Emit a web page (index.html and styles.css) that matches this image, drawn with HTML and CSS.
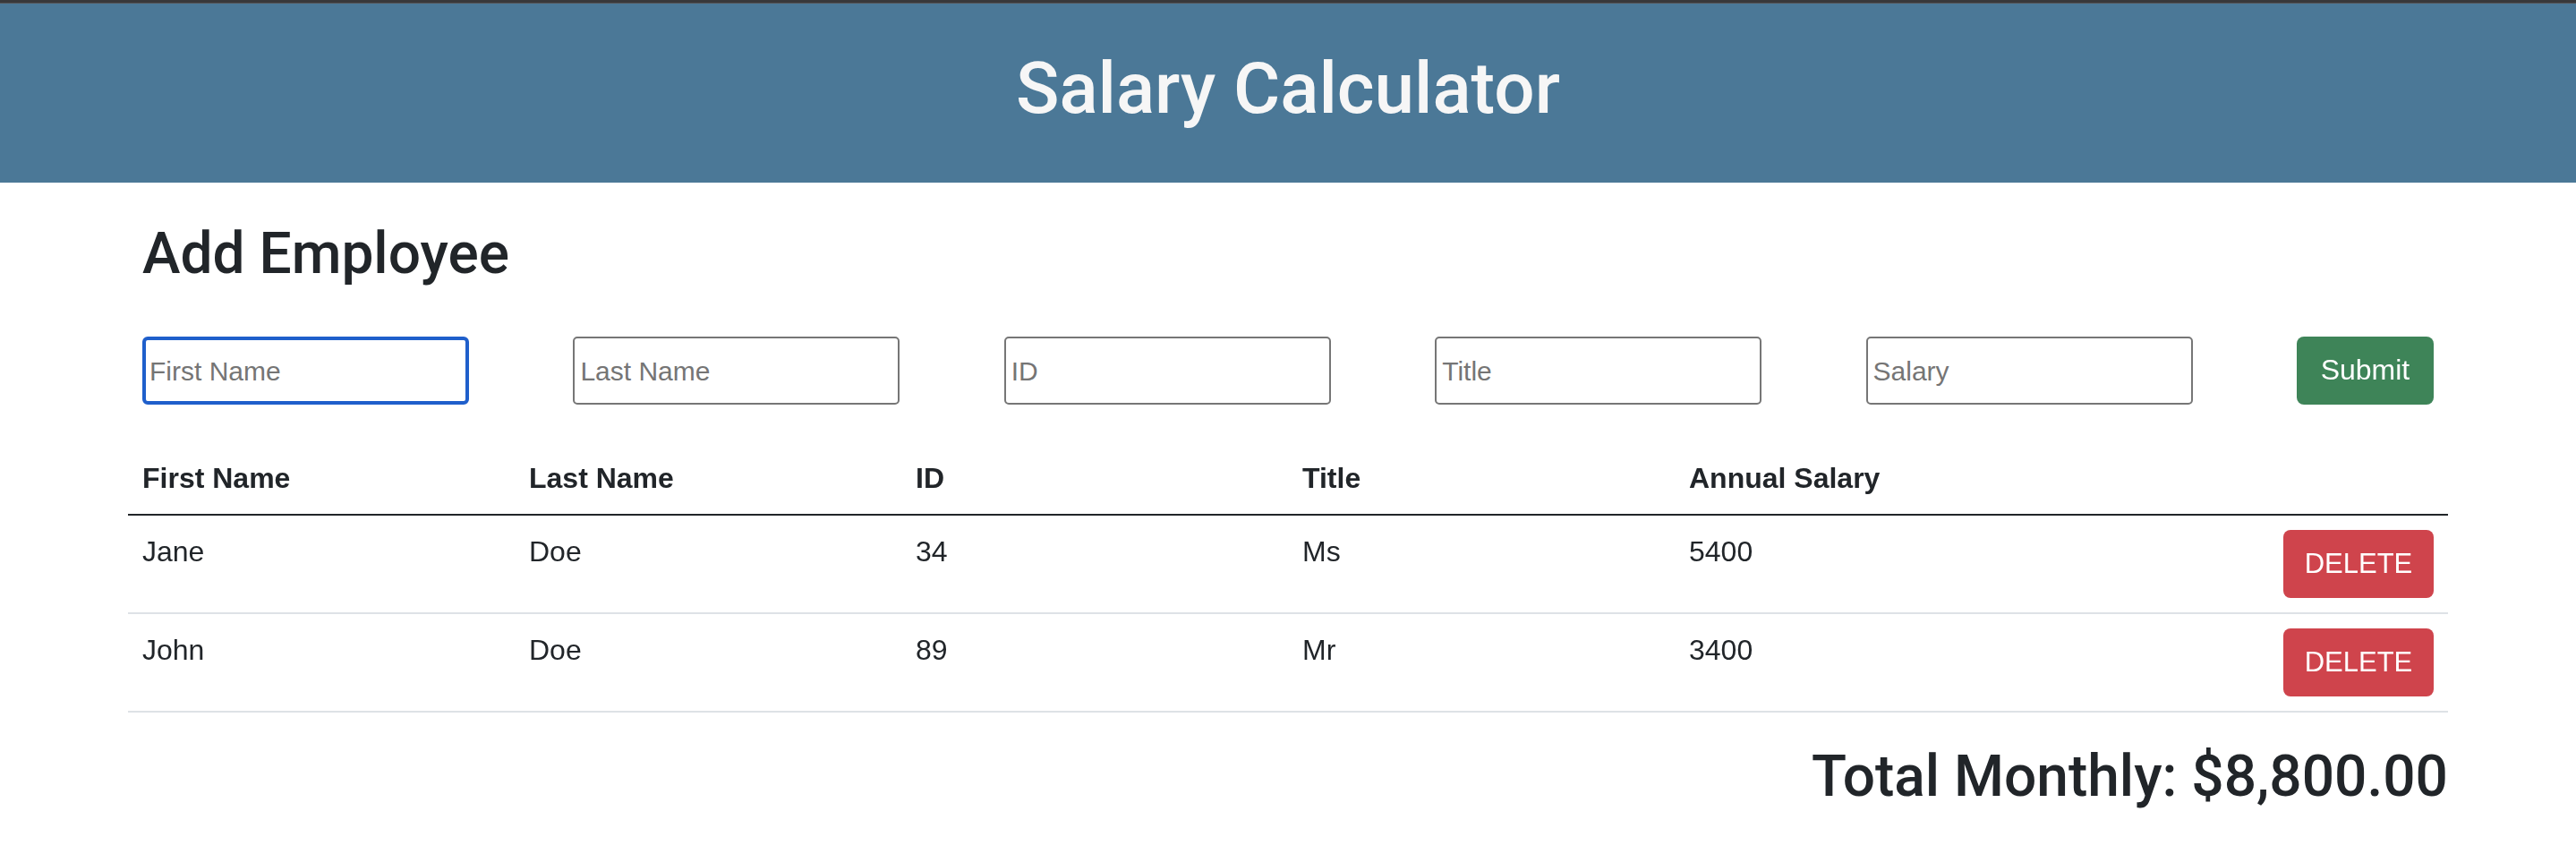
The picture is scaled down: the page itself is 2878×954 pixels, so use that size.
FILE: index.html
```html
<!DOCTYPE html>
<html lang="en">
<head>
<meta charset="utf-8">
<title>Salary Calculator</title>
<link rel="stylesheet" href="styles.css">
</head>
<body>
<div class="topbar"></div>
<header class="app-header">
  <h1 class="app-title">Salary Calculator</h1>
</header>
<main class="container">
  <section class="add-section">
    <h2 class="section-title">Add Employee</h2>
    <form class="employee-form">
      <input class="field is-focused" type="text" placeholder="First Name" autofocus>
      <input class="field" type="text" placeholder="Last Name">
      <input class="field" type="text" placeholder="ID">
      <input class="field" type="text" placeholder="Title">
      <input class="field" type="text" placeholder="Salary">
      <button class="btn btn-submit" type="button">Submit</button>
    </form>
  </section>
  <table class="emp-table">
    <thead>
      <tr>
        <th>First Name</th>
        <th>Last Name</th>
        <th>ID</th>
        <th>Title</th>
        <th>Annual Salary</th>
        <th></th>
      </tr>
    </thead>
    <tbody>
      <tr>
        <td>Jane</td>
        <td>Doe</td>
        <td>34</td>
        <td>Ms</td>
        <td>5400</td>
        <td class="action-cell"><button class="btn btn-delete" type="button">Delete</button></td>
      </tr>
      <tr>
        <td>John</td>
        <td>Doe</td>
        <td>89</td>
        <td>Mr</td>
        <td>3400</td>
        <td class="action-cell"><button class="btn btn-delete" type="button">Delete</button></td>
      </tr>
    </tbody>
  </table>
  <h2 class="total">Total Monthly: $8,800.00</h2>
</main>
</body>
</html>
```
FILE: styles.css
```css
* {
  box-sizing: border-box;
}

html, body {
  margin: 0;
  padding: 0;
  background: #ffffff;
}

body {
  font-family: "Liberation Sans", Arial, sans-serif;
  font-size: 32px;
  line-height: 1.5;
  color: #212529;
}

.topbar {
  height: 4px;
  background: #38383a;
  border-bottom: 1px solid #555557;
}

.app-header {
  height: 200px;
  background: #4b7897;
  display: flex;
  align-items: center;
  justify-content: center;
}

.app-title {
  margin: 0 0 10px;
  font-family: Roboto, "Liberation Sans", Arial, sans-serif;
  font-size: 80px;
  font-weight: 500;
  line-height: 1.2;
  color: #f6f6f6;
}

.container {
  max-width: 2640px;
  margin: 0 auto;
  padding: 0 24px;
}

.add-section {
  padding: 0 16px;
}

.section-title {
  margin: 42px 0 0;
  font-family: Roboto, "Liberation Sans", Arial, sans-serif;
  font-size: 64px;
  font-weight: 500;
  line-height: 1.2;
}

.employee-form {
  margin-top: 53px;
  display: flex;
  justify-content: space-between;
  align-items: center;
}

.field {
  width: 365px;
  height: 76px;
  padding: 2px 6px 0;
  border: 2px solid #767676;
  border-radius: 5px;
  font-family: "Liberation Sans", Arial, sans-serif;
  font-size: 30px;
  color: #212529;
  background: #ffffff;
  outline: none;
}

.field::placeholder {
  color: #757575;
}

.field.is-focused,
.field:focus {
  border: 4px solid #1f5fcb;
  border-radius: 6px;
  padding: 2px 4px 0;
}

.btn {
  height: 76px;
  border: none;
  font-family: "Liberation Sans", Arial, sans-serif;
  color: #ffffff;
  cursor: pointer;
}

.btn-submit {
  width: 153px;
  background: #3e8458;
  border-radius: 8px;
  font-size: 32px;
}

.emp-table {
  width: 100%;
  margin-top: 42px;
  margin-bottom: 34px;
  border-collapse: collapse;
  table-layout: fixed;
}

.emp-table th {
  padding: 16px;
  text-align: left;
  font-weight: 700;
  line-height: 48px;
  border-bottom: 2px solid #212529;
}

.emp-table td {
  padding: 16px;
  line-height: 48px;
  vertical-align: top;
  border-bottom: 2px solid #dee2e6;
}

.emp-table td.action-cell {
  text-align: right;
}

.btn-delete {
  display: inline-block;
  vertical-align: top;
  width: 168px;
  padding: 0;
  background: #cf444c;
  border-radius: 8px;
  font-size: 31px;
  text-transform: uppercase;
}

.total {
  margin: 0;
  text-align: right;
  font-family: Roboto, "Liberation Sans", Arial, sans-serif;
  font-size: 64px;
  font-weight: 500;
  line-height: 1.2;
}
```
